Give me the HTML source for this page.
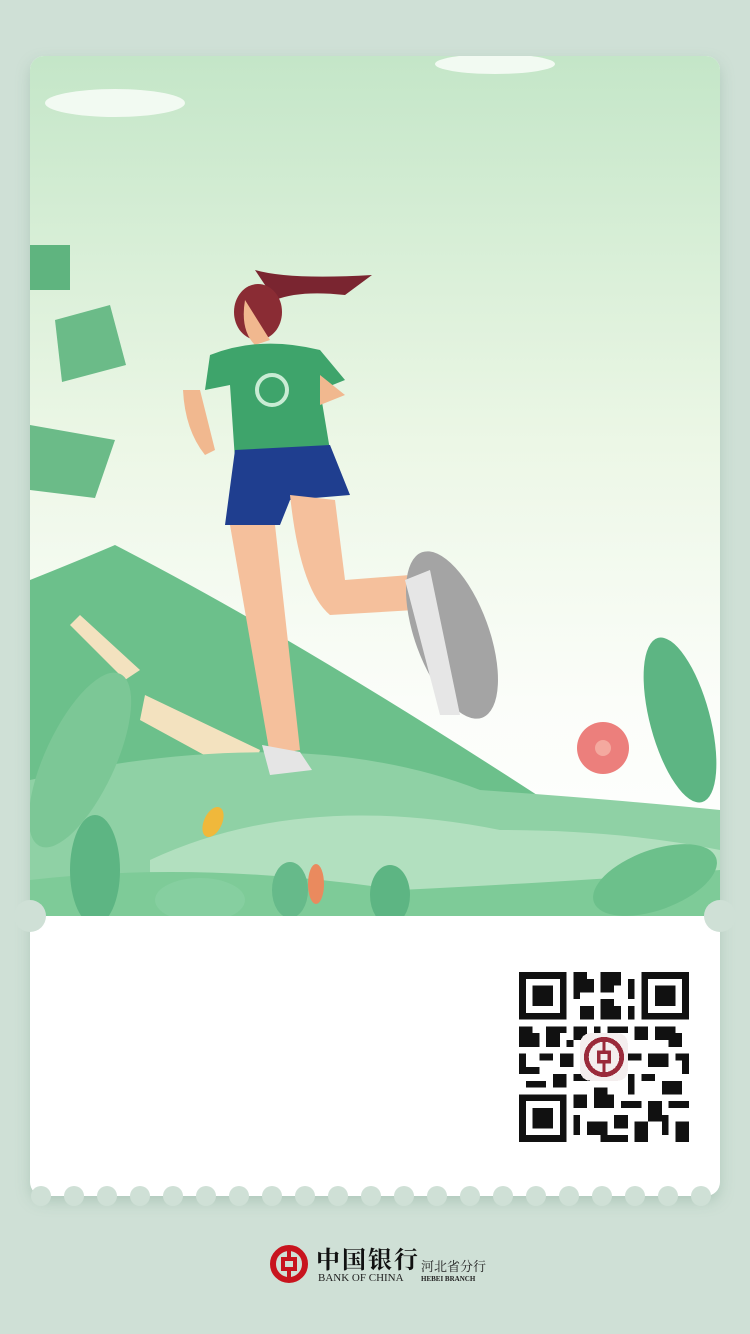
<!DOCTYPE html>
<html><head><meta charset="utf-8"><style>
html,body{margin:0;padding:0}
body{width:750px;height:1334px;background:#cfe0d6;position:relative;overflow:hidden;font-family:"Liberation Serif","Noto Serif CJK SC",serif}
.card{position:absolute;left:30px;top:56px;width:690px;height:1140px;border-radius:14px;overflow:hidden;background:#fff;box-shadow:0 6px 14px rgba(120,160,140,.35)}
.notch{position:absolute;width:32px;height:32px;border-radius:50%;background:#cfe0d6;top:900px}
.sc{position:absolute;top:1186px;width:20px;height:20px;border-radius:50%;background:#cfe0d6}
</style></head><body>
<div class="card">
<svg width="690" height="860" viewBox="30 56 690 860" style="position:absolute;left:0;top:0">
<defs>
<linearGradient id="sky" x1="0" y1="0" x2="0" y2="1"><stop offset="0" stop-color="#c4e6c8"/><stop offset=".45" stop-color="#ecf7e6"/><stop offset=".75" stop-color="#fbfdf9"/><stop offset="1" stop-color="#ffffff"/></linearGradient>
</defs>
<rect x="30" y="56" width="690" height="860" fill="url(#sky)"/>
<ellipse cx="115" cy="103" rx="70" ry="14" fill="#f2faf2"/>
<ellipse cx="495" cy="64" rx="60" ry="10" fill="#f2faf2"/>
<path d="M30 245H70V290H30Z" fill="#5fb47f"/>
<path d="M55 320L110 305L126 365L62 382Z" fill="#6bbb88"/>
<path d="M30 425L115 440L95 498L30 490Z" fill="#6bbb88"/>
<path d="M30 580Q80 560 115 545Q300 640 560 810L30 900Z" fill="#6cc08b"/>
<path d="M80 615L140 670L125 680L70 625Z" fill="#f3e2bf"/>
<path d="M145 695L260 750L250 780L140 720Z" fill="#f3e2bf"/>
<path d="M30 780Q300 720 480 790Q620 800 720 810V916H30Z" fill="#8fd1a5"/>
<path d="M150 860Q300 790 500 830Q620 830 720 850V916H150Z" fill="#b2e0bf"/>
<path d="M30 880Q200 860 400 890Q600 880 720 870V916H30Z" fill="#7ecb98"/>
<ellipse cx="80" cy="760" rx="35" ry="95" fill="#7cc796" transform="rotate(25 80 760)"/>
<ellipse cx="95" cy="870" rx="25" ry="55" fill="#5db583"/>
<ellipse cx="390" cy="895" rx="20" ry="30" fill="#5db583"/>
<ellipse cx="290" cy="890" rx="18" ry="28" fill="#66ba8a"/>
<ellipse cx="680" cy="720" rx="30" ry="85" fill="#5db583" transform="rotate(-15 680 720)"/>
<ellipse cx="655" cy="880" rx="65" ry="30" fill="#6cc08b" transform="rotate(-20 655 880)"/>
<ellipse cx="200" cy="900" rx="45" ry="22" fill="#86cfa0"/>
<circle cx="603" cy="748" r="26" fill="#ec7f7c"/><circle cx="603" cy="748" r="8" fill="#f4a99f"/>
<ellipse cx="213" cy="822" rx="9" ry="16" fill="#f0b83b" transform="rotate(25 213 822)"/>
<ellipse cx="316" cy="884" rx="8" ry="20" fill="#ea8a5e"/>
<path d="M255 270Q290 280 372 275L345 295Q300 290 275 300Z" fill="#7a2530"/>
<ellipse cx="258" cy="312" rx="24" ry="28" fill="#8a2c34"/>
<path d="M245 300Q240 330 255 345L270 340Z" fill="#f1b88f"/>
<path d="M210 355Q260 335 320 350L345 380L320 390L330 450L235 460L230 385L205 390Z" fill="#3ea46b"/>
<circle cx="272" cy="390" r="15" fill="none" stroke="#c9ecd4" stroke-width="4"/>
<path d="M183 390Q185 430 205 455L215 450L200 390Z" fill="#f1b88f"/>
<path d="M320 375L345 395L320 405Z" fill="#f1b88f"/>
<path d="M235 450L330 445L350 495L290 500L280 525L225 525Z" fill="#1f3e8f"/>
<path d="M230 525L275 525L300 750L270 755Z" fill="#f5c09c"/>
<path d="M290 495L335 500L345 580L410 575L415 610L330 615Q300 590 290 495Z" fill="#f5c09c"/>
<path d="M262 745L300 752L312 770L270 775Z" fill="#e5e5e5"/>
<ellipse cx="452" cy="635" rx="37" ry="88" fill="#a4a4a4" transform="rotate(-20 452 635)"/>
<path d="M405 580L430 570L460 715L440 715Z" fill="#e6e6e6"/>
</svg>
<svg width="170" height="170" viewBox="0 0 25 25" style="position:absolute;left:489px;top:916px" shape-rendering="crispEdges">
<rect width="25" height="25" fill="#fff"/>
<g fill="#111">
<path d="M0 0h7v7h-7zM1 1v5h5v-5zM2 2h3v3h-3z M18 0h7v7h-7zM19 1v5h5v-5zM20 2h3v3h-3z M0 18h7v7h-7zM1 19v5h5v-5zM2 20h3v3h-3z" fill-rule="evenodd"/>
<path d="M8 0h2v1h1v2h-2v1h-1zM12 0h3v2h-1v1h-2zM16 1h1v3h-1zM9 5h2v2h-2zM12 4h2v1h1v2h-3zM16 5h1v2h-1z M0 8h2v1h1v2h-3zM4 8h3v1h-1v2h-2zM8 8h2v2h-2zM11 8h1v3h-1zM13 8h3v1h-3zM17 8h2v2h-2zM20 8h3v1h1v2h-2v-1h-2zM0 12h1v2h2v1h-3zM3 12h2v1h-2zM6 12h2v2h-2zM16 12h2v1h-2zM19 12h3v2h-3zM23 12h2v3h-1v-2h-1zM1 16h3v1h-3zM5 15h2v2h-2zM8 15h3v1h-3zM16 15h1v3h-1zM18 15h2v1h-2zM21 16h3v2h-3zM8 18h2v2h-2zM11 17h2v1h1v2h-3zM15 19h3v1h-3zM19 19h2v3h-2zM22 19h3v1h-3zM8 21h1v3h-1zM10 22h3v2h-3zM14 21h2v2h-2zM17 22h2v3h-2zM21 21h1v3h-1zM23 22h2v3h-2zM12 24h4v1h-4zM9 9h1v1h-1zM2 10h1v1h-1zM13 10h2v1h-2zM7 10h1v1h-1z"/>
</g>
<rect x="9" y="9" width="7" height="7" rx="1.5" fill="#f4eeee"/>
<circle cx="12.5" cy="12.5" r="2.6" fill="none" stroke="#9a2a3a" stroke-width=".7"/>
<rect x="11.7" y="11.8" width="1.6" height="1.4" fill="none" stroke="#9a2a3a" stroke-width=".5"/>
<path d="M12.5 9.9v1.9M12.5 13.2v1.9" stroke="#9a2a3a" stroke-width=".5"/>
</svg>
</div>
<div class="notch" style="left:14px"></div>
<div class="notch" style="left:704px"></div>
<div class="sc" style="left:31px"></div><div class="sc" style="left:64px"></div><div class="sc" style="left:97px"></div><div class="sc" style="left:130px"></div><div class="sc" style="left:163px"></div><div class="sc" style="left:196px"></div><div class="sc" style="left:229px"></div><div class="sc" style="left:262px"></div><div class="sc" style="left:295px"></div><div class="sc" style="left:328px"></div><div class="sc" style="left:361px"></div><div class="sc" style="left:394px"></div><div class="sc" style="left:427px"></div><div class="sc" style="left:460px"></div><div class="sc" style="left:493px"></div><div class="sc" style="left:526px"></div><div class="sc" style="left:559px"></div><div class="sc" style="left:592px"></div><div class="sc" style="left:625px"></div><div class="sc" style="left:658px"></div><div class="sc" style="left:691px"></div>
<svg width="40" height="40" viewBox="0 0 40 40" style="position:absolute;left:269px;top:1244px">
<circle cx="20" cy="20" r="16" fill="none" stroke="#c8141e" stroke-width="6"/>
<rect x="14" y="15" width="12" height="10" fill="none" stroke="#c8141e" stroke-width="4"/>
<path d="M20 4v11M20 25v11" stroke="#c8141e" stroke-width="4"/>
</svg>
<div style="position:absolute;left:316px;top:1240px;font-size:24px;letter-spacing:2px;color:#111;font-family:'Noto Serif CJK SC',serif;font-weight:bold">中国银行</div>
<div style="position:absolute;left:318px;top:1272px;font-size:11px;color:#222">BANK OF CHINA</div>
<div style="position:absolute;left:421px;top:1256px;font-size:13px;color:#222;font-family:'Noto Serif CJK SC',serif">河北省分行</div>
<div style="position:absolute;left:421px;top:1275px;font-size:7px;color:#222;font-weight:bold">HEBEI BRANCH</div>
</body></html>
